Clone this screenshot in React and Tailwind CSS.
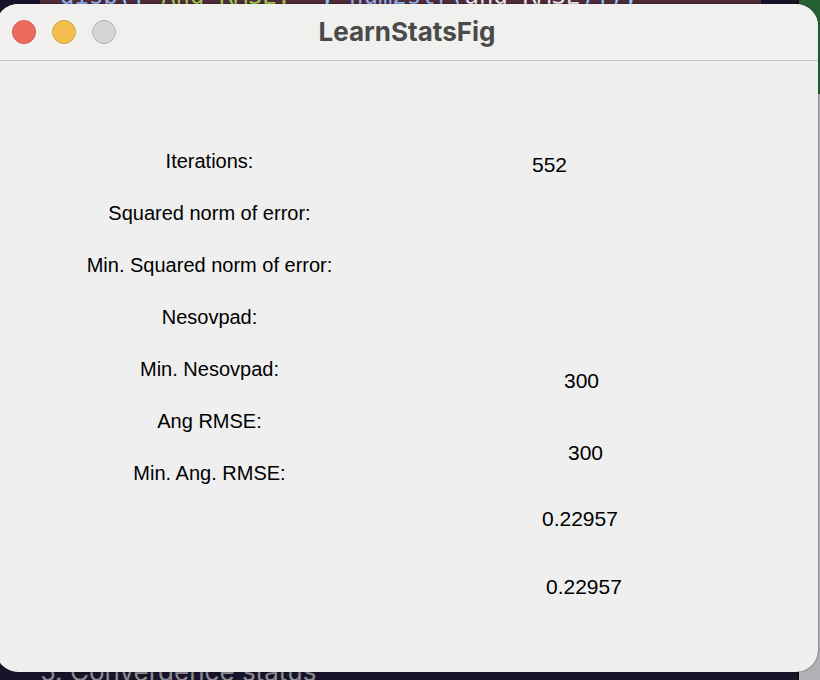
const labels = [
  "Iterations:",
  "Squared norm of error:",
  "Min. Squared norm of error:",
  "Nesovpad:",
  "Min. Nesovpad:",
  "Ang RMSE:",
  "Min. Ang. RMSE:",
];

function Desktop() {
  return (
    <div className="flex min-h-screen">
      <div className="flex min-w-0 flex-1 flex-col justify-between overflow-hidden bg-[#17142a]">
        <div className="ml-10 mr-9 flex h-1 items-end bg-[#4f2a39] pl-5">
          <code className="whitespace-pre font-['DejaVu_Sans_Mono',monospace] text-2xl leading-4 text-[#8fd0f5]">
            <span className="text-[#8fb0ee]">disp</span>([
            <span className="text-[#9cc94c]">'Ang RMSE: '</span>,{" "}
            <span className="text-[#8fb0ee]">num2str</span>(
            <span className="text-[#e4e4ec]">ang_RMSE</span>)]);
          </code>
        </div>
        <div className="h-2 pl-10">
          <p className="-mt-3.5 font-['Inter',sans-serif] text-[26px] leading-7 text-[#8e8e92]">
            5. Convergence status
          </p>
        </div>
      </div>
      <div className="flex w-[23px] flex-col border-l-2 border-[#101014] bg-[#b2b2b6]">
        <div className="h-[94px] bg-[#266136]" />
      </div>
    </div>
  );
}

function TitleBar() {
  return (
    <header className="grid h-[57px] grid-cols-[1fr_auto_1fr] items-center border-b border-[#c6c6c6] bg-[#f0f0ee]">
      <div className="flex gap-4 pl-4">
        <button type="button" aria-label="Close" className="size-6 rounded-full border border-[#d95549] bg-[#ec6a5e]" />
        <button type="button" aria-label="Minimize" className="size-6 rounded-full border border-[#d9a040] bg-[#f4bf4f]" />
        <button type="button" aria-label="Zoom" disabled className="size-6 rounded-full border border-[#b5b5b3] bg-[#d6d6d4]" />
      </div>
      <h1 className="font-['Inter',sans-serif] text-[26px] font-bold leading-8 text-[#4a4a4a]">LearnStatsFig</h1>
    </header>
  );
}

export default function App() {
  return (
    <main className="relative min-h-screen overflow-hidden">
      <Desktop />
      <section className="absolute -left-1 bottom-2 right-0.5 top-1 overflow-hidden rounded-[22px] bg-[#efefef] shadow-[0_0_2px_rgba(0,0,0,0.6)]">
        <TitleBar />
        <div className="grid grid-cols-2 pt-[74px] font-['Liberation_Sans',sans-serif] text-black">
          <div className="grid auto-rows-[52px] pl-5 pr-1 text-center text-xl leading-[52px]">
            {labels.map((label) => (
              <span key={label}>{label}</span>
            ))}
          </div>
          <div className="flex flex-col pl-[125px] pt-4 text-[21px] leading-7">
            <output>552</output>
            <output className="pl-8 pt-[188px]">300</output>
            <output className="pl-9 pt-11">300</output>
            <output className="pl-2.5 pt-[38px]">0.22957</output>
            <output className="pl-3.5 pt-10">0.22957</output>
          </div>
        </div>
      </section>
    </main>
  );
}
